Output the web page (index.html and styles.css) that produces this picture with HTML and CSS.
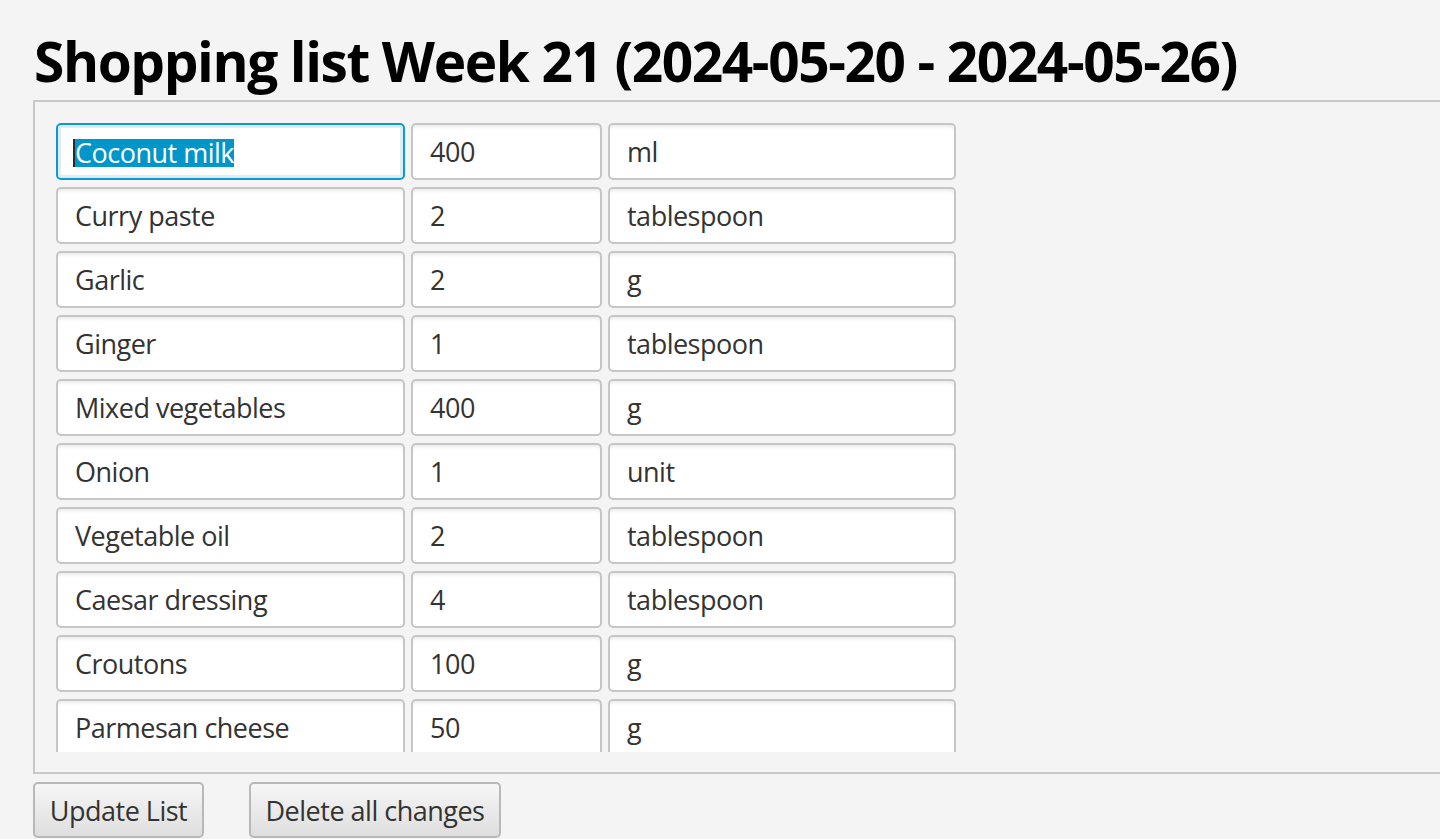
FILE: index.html
```html
<!DOCTYPE html>
<html lang="en">
<head>
<meta charset="utf-8">
<title>Shopping list</title>
<link rel="stylesheet" href="styles.css">
</head>
<body>
<main class="page">
  <h1 class="title">Shopping list Week 21 (2024-05-20 - 2024-05-26)</h1>
  <section class="scroll">
    <div class="viewport">
      <div class="grid">
        <div class="field focused"><span class="sel">Coconut milk</span></div>
        <div class="field">400</div>
        <div class="field">ml</div>

        <div class="field">Curry paste</div>
        <div class="field">2</div>
        <div class="field">tablespoon</div>

        <div class="field">Garlic</div>
        <div class="field">2</div>
        <div class="field">g</div>

        <div class="field">Ginger</div>
        <div class="field">1</div>
        <div class="field">tablespoon</div>

        <div class="field">Mixed vegetables</div>
        <div class="field">400</div>
        <div class="field">g</div>

        <div class="field">Onion</div>
        <div class="field">1</div>
        <div class="field">unit</div>

        <div class="field">Vegetable oil</div>
        <div class="field">2</div>
        <div class="field">tablespoon</div>

        <div class="field">Caesar dressing</div>
        <div class="field">4</div>
        <div class="field">tablespoon</div>

        <div class="field">Croutons</div>
        <div class="field">100</div>
        <div class="field">g</div>

        <div class="field">Parmesan cheese</div>
        <div class="field">50</div>
        <div class="field">g</div>
      </div>
    </div>
  </section>
  <div class="actions">
    <button class="btn btn-update">Update List</button>
    <button class="btn btn-delete">Delete all changes</button>
  </div>
</main>
</body>
</html>
```

FILE: styles.css
```css
html, body {
  margin: 0;
  padding: 0;
  overflow: hidden;
  background: #f4f4f4;
  width: 1440px;
  height: 839px;
}

body {
  font-family: "Open Sans", "Noto Sans", sans-serif;
  color: #333333;
}

.page {
  padding-left: 33px;
}

.title {
  margin: 0 0 6px 1px;
  padding-top: 27px;
  font-size: 55px;
  letter-spacing: -1.4px;
  line-height: 67px;
  font-weight: 700;
  color: #000;
  white-space: nowrap;
}

.scroll {
  box-sizing: border-box;
  height: 674px;
  margin-right: -20px;
  border: 2px solid #c8c8c8;
  padding: 20px;
}

.viewport {
  height: 630px;
  overflow: hidden;
}

.grid {
  display: grid;
  grid-template-columns: 349px 191px 348px;
  grid-auto-rows: 57px;
  column-gap: 6px;
  row-gap: 7px;
  padding: 1px;
}

.field {
  box-sizing: border-box;
  height: 57px;
  border: 2px solid #c6c6c6;
  border-radius: 5px;
  background: #fff;
  box-shadow: inset 0 4px 4px -3px rgba(0, 0, 0, 0.12);
  padding-left: 17px;
  font-size: 27px;
  letter-spacing: -0.5px;
  line-height: 53px;
  color: #333;
  white-space: nowrap;
  overflow: hidden;
}

.field.focused {
  border-color: #0a9bd0;
  box-shadow: inset 0 0 0 3px #dcedf6;
  padding-left: 15px;
}

.sel {
  display: inline-block;
  line-height: 28px;
  background: #0096c9;
  color: #fff;
  border-left: 2px solid #2b2b2b;
  vertical-align: middle;
  position: relative;
  top: -2px;
}

.actions {
  display: flex;
  gap: 45px;
  margin-top: 8px;
}

.btn {
  box-sizing: border-box;
  height: 56px;
  border: 2px solid #b8b8b8;
  border-radius: 5px;
  background: linear-gradient(#f6f6f6, #dedede);
  font-family: inherit;
  font-size: 27px;
  letter-spacing: -0.5px;
  color: #333;
  padding: 0;
  text-align: center;
}

.btn-update { width: 171px; }
.btn-delete { width: 252px; }
```
